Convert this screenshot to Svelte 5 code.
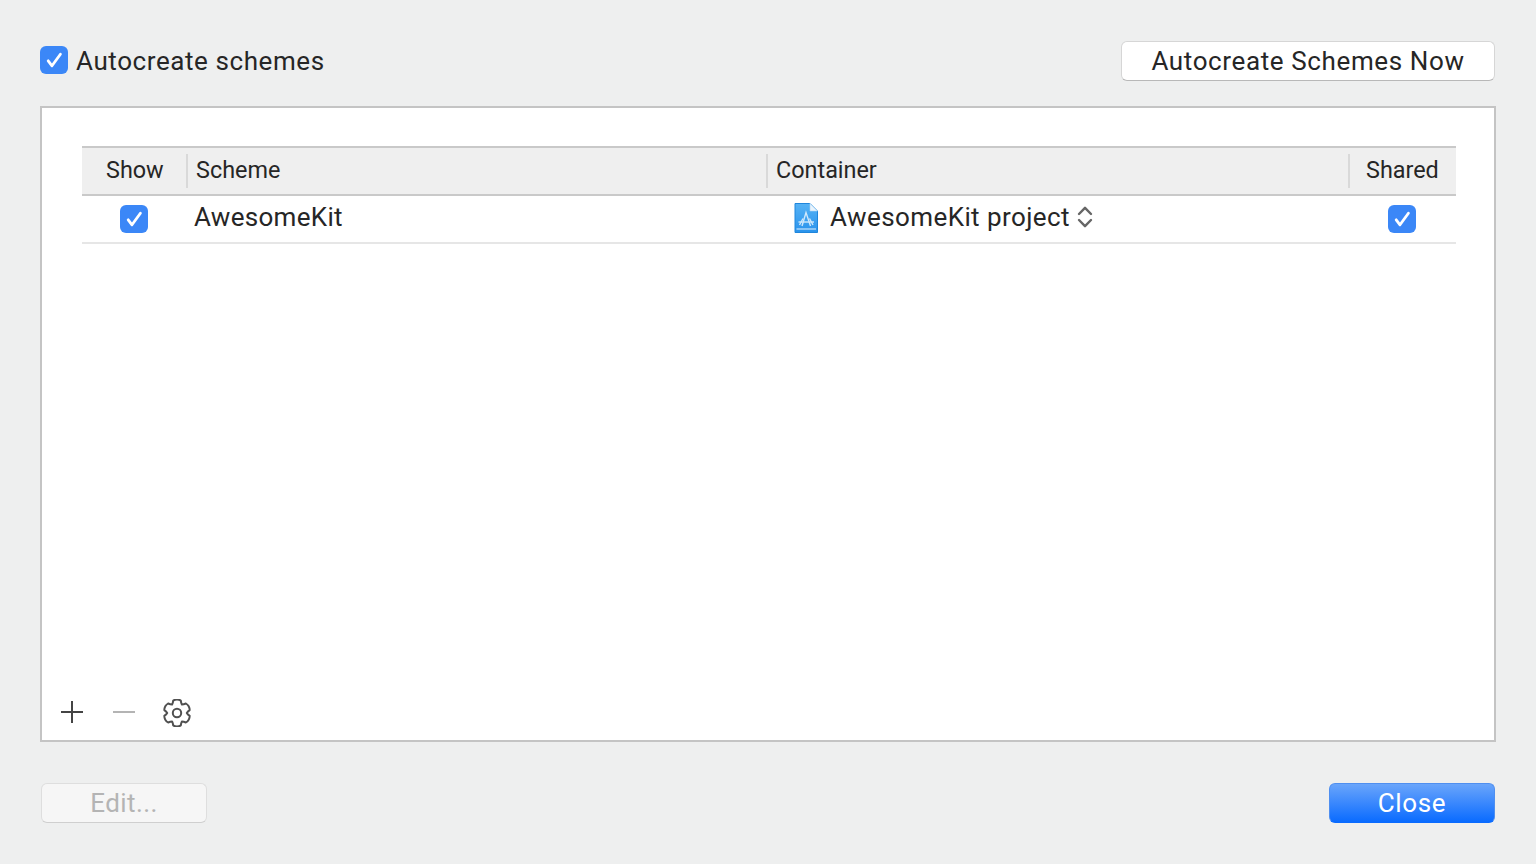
<script>
  const cx = 14, cy = 14;
  function pt(r, deg) {
    const a = (deg * Math.PI) / 180;
    return `${(cx + r * Math.cos(a)).toFixed(2)} ${(cy + r * Math.sin(a)).toFixed(2)}`;
  }
  let gear = '';
  for (let i = 0; i < 6; i++) {
    const a = i * 60 - 90;
    const start = `${pt(9.8, a - 30)}`;
    if (i === 0) gear += `M${start} `;
    gear += `Q${pt(10.8, a - 22)} ${pt(13, a - 17)} Q${pt(14.6, a)} ${pt(13, a + 17)} Q${pt(10.8, a + 22)} ${pt(9.8, a + 30)} `;
  }
  gear += 'Z';
  const rows = [{ name: 'AwesomeKit', container: 'AwesomeKit project' }];
</script>

{#snippet check()}
  <span class="check">
    <svg width="28" height="28" viewBox="0 0 28 28" fill="none">
      <path d="M8.2 14.8 L12 19.8 L20.4 8.2" stroke="#fff" stroke-width="2.8" stroke-linecap="round" stroke-linejoin="round" />
    </svg>
  </span>
{/snippet}

<div class="window">
  <div class="top">
    <label class="auto">
      {@render check()}
      <span>Autocreate schemes</span>
    </label>
    <button class="btn now">Autocreate Schemes Now</button>
  </div>

  <div class="panel">
    <div class="table">
      <div class="head">
        <div class="th show">Show</div>
        <div class="th scheme">Scheme</div>
        <div class="th container">Container</div>
        <div class="th shared">Shared</div>
      </div>
      {#each rows as row}
        <div class="row">
          <div class="td show">{@render check()}</div>
          <div class="td scheme">{row.name}</div>
          <div class="td container">
            <svg class="doc" width="26" height="32" viewBox="0 0 26 32">
              <defs>
                <linearGradient id="docfill" x1="0" y1="0" x2="0" y2="1">
                  <stop offset="0" stop-color="#55b2f5" />
                  <stop offset="1" stop-color="#2a93ec" />
                </linearGradient>
              </defs>
              <path d="M2 1.5 H17 L24.5 9 V30.5 H2 Z" fill="url(#docfill)" stroke="#1f86dc" stroke-width="1" />
              <path d="M17 1.5 L24.5 9 H17 Z" fill="#eaf4fc" stroke="#a8d4f4" stroke-width="0.6" />
              <path d="M3.5 27 H23" stroke="#d5ecfc" stroke-width="1.1" />
              <g stroke="#cfe8fb" stroke-width="1.4" fill="none">
                <path d="M9 24 L13 10.5 L17.5 24" />
                <path d="M5.5 20 H21" />
                <path d="M6.5 23 L10 16.5 M20 23 L16.5 16.5" />
              </g>
            </svg>
            <span class="cname">{row.container}</span>
            <svg class="updown" width="16" height="24" viewBox="0 0 16 24" fill="none">
              <path d="M2 9 L8 2.8 L14 9 M2 15 L8 21.2 L14 15" stroke="#666" stroke-width="2.4" stroke-linecap="round" stroke-linejoin="round" />
            </svg>
          </div>
          <div class="td shared">{@render check()}</div>
        </div>
      {/each}
    </div>

    <div class="tools">
      <svg class="plus" width="24" height="24" viewBox="0 0 24 24"><path d="M12 1 V23 M1 12 H23" stroke="#444" stroke-width="2" /></svg>
      <svg class="minus" width="24" height="24" viewBox="0 0 24 24"><path d="M1 12 H23" stroke="#b4b4b4" stroke-width="2" /></svg>
      <svg class="gear" width="28" height="28" viewBox="0 0 28 28" fill="none">
        <path d={gear} stroke="#505050" stroke-width="2" stroke-linejoin="round" />
        <circle cx="14" cy="14" r="4.2" stroke="#505050" stroke-width="2" />
      </svg>
    </div>
  </div>

  <div class="bottom">
    <button class="btn edit" disabled>Edit...</button>
    <button class="btn close">Close</button>
  </div>
</div>

<style>
  :global(body) {
    margin: 0;
    background: #eeefef;
  }
  .window {
    box-sizing: border-box;
    width: 1536px;
    height: 864px;
    padding: 41px 40px 41px 40px;
    display: flex;
    flex-direction: column;
    font-family: Roboto, "Liberation Sans", sans-serif;
    color: #262626;
    background: #eeefef;
    overflow: hidden;
  }
  .top {
    display: flex;
    justify-content: space-between;
    align-items: center;
    height: 40px;
    margin-bottom: 25px;
  }
  .auto {
    display: flex;
    align-items: center;
    gap: 8px;
    font-size: 26px;
    letter-spacing: 0.58px;
  }
  .auto .check {
    margin-bottom: 2px;
  }
  .check {
    display: block;
    width: 28px;
    height: 28px;
    border-radius: 6px;
    background: #3b87f7;
    flex: none;
  }
  .check svg {
    display: block;
  }
  .btn {
    box-sizing: border-box;
    height: 40px;
    border-radius: 6px;
    font-family: inherit;
    font-size: 26px;
    letter-spacing: 0.62px;
    padding: 0;
    color: #262626;
    background: #fff;
    border: 1px solid #d6d6d6;
    border-bottom-color: #b8b8b8;
  }
  .now {
    width: 374px;
    margin-right: 1px;
  }
  .panel {
    box-sizing: border-box;
    flex: none;
    height: 636px;
    background: #fff;
    border: 2px solid #c4c4c4;
    display: flex;
    flex-direction: column;
    padding: 38px 38px 0 40px;
  }
  .table {
    flex: 1;
  }
  .head,
  .row {
    display: grid;
    grid-template-columns: 104px 580px 582px 108px;
  }
  .head {
    box-sizing: border-box;
    height: 50px;
    background: #efefef;
    border-top: 2px solid #c9c9c9;
    border-bottom: 2px solid #c9c9c9;
    align-items: center;
  }
  .th {
    box-sizing: border-box;
    font-size: 23.4px;
    height: 34px;
    line-height: 33px;
    padding-left: 8px;
    border-left: 2px solid #d9d9d9;
    white-space: nowrap;
  }
  .th.show {
    border-left: none;
    padding-left: 24px;
  }
  .th.shared {
    padding-left: 16px;
  }
  .row {
    box-sizing: border-box;
    height: 48px;
    border-bottom: 2px solid #e6e6e6;
    align-items: center;
  }
  .td {
    display: flex;
    align-items: center;
    font-size: 26px;
    letter-spacing: 0.3px;
    white-space: nowrap;
  }
  .td.show {
    padding-left: 38px;
  }
  .td.scheme {
    padding-left: 8px;
    margin-top: -4px;
  }
  .td.container {
    padding-left: 27px;
  }
  .cname {
    margin-left: 11px;
    margin-top: -4px;
    letter-spacing: 0.42px;
  }
  .updown {
    margin-left: 7px;
    margin-top: -4px;
  }
  .doc {
    margin-top: -2px;
  }
  .td.shared {
    padding-left: 40px;
  }
  .tools {
    display: flex;
    align-items: center;
    height: 28px;
    margin: 0 0 13px -22px;
  }
  .plus,
  .minus {
    margin-bottom: 2px;
  }
  .minus {
    margin-left: 28px;
  }
  .gear {
    margin-left: 27px;
  }
  .bottom {
    display: flex;
    justify-content: space-between;
    margin-top: 41px;
    padding: 0 1px;
  }
  .edit {
    width: 166px;
    color: #b4b4b4;
    background: #f6f6f6;
    border-color: #dedede;
    border-bottom-color: #cfcfcf;
    letter-spacing: 0.4px;
  }
  .close {
    width: 166px;
    color: #fff;
    background: linear-gradient(#6aa5fb, #0a6bff);
    border-color: #4f8ff0;
    border-bottom-color: #0a6bff;
  }
</style>
